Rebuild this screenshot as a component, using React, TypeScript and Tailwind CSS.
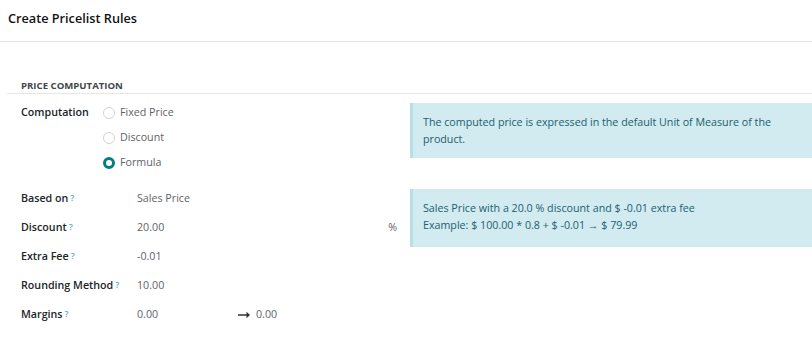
import React from "react";

const font = { fontFamily: '"Open Sans", "Noto Sans", sans-serif' };

function Q() {
  return <sup className="ml-[2px] text-[9px] font-semibold text-[#5aa9d6] relative -top-[1px]">?</sup>;
}

function Radio({ checked, label }: { checked?: boolean; label: string }) {
  return (
    <div className="flex h-[25px] items-center">
      <span
        className={
          checked
            ? "box-border h-[12px] w-[12px] rounded-full border-[3.5px] border-[#017e84] bg-white"
            : "box-border h-[12px] w-[12px] rounded-full border border-[#cfd4da] bg-white"
        }
      />
      <span className="ml-[5px] text-[#5f6368]">{label}</span>
    </div>
  );
}

function Field({ label, children }: { label: string; children: React.ReactNode }) {
  return (
    <div className="flex h-[29px] items-center">
      <div className="w-[116px] font-semibold text-[#212529]">
        {label}
        <Q />
      </div>
      <div className="flex flex-1 items-center text-[#5f6368]">{children}</div>
    </div>
  );
}

export default function App() {
  return (
    <div className="h-[338px] w-[812px] overflow-hidden bg-white text-[10.7px] leading-[17px]" style={font}>
      <div className="h-[42px] border-b border-[#e3e3e3] pl-[8px] pt-[8px]">
        <div className="text-[12.7px] font-semibold leading-[20px] text-[#111]">Create Pricelist Rules</div>
      </div>
      <div className="ml-[7px] mt-[37px] border-b border-[#e6e6e6] pl-[14px]">
        <div className="text-[9.6px] font-bold uppercase leading-[14px] text-[#3f464d]">Price Computation</div>
      </div>
      <div className="mt-[6px] flex">
        <div className="flex w-[410px] pl-[21px]">
          <div className="flex h-[25px] w-[82px] items-center font-semibold text-[#212529]">Computation</div>
          <div className="flex flex-col">
            <Radio label="Fixed Price" />
            <Radio label="Discount" />
            <Radio checked label="Formula" />
          </div>
        </div>
        <div className="mt-[3px] flex-1 self-start border-l-[3px] border-[#b8dee6] bg-[#d1ebf0] pb-[10px] pl-[10px] pr-[30px] pt-[11px] text-[10.7px] text-[#22606e]">
          The computed price is expressed in the default Unit of Measure of the product.
        </div>
      </div>
      <div className="mt-[9px] flex">
        <div className="w-[410px] pl-[21px]">
          <Field label="Based on">Sales Price</Field>
          <Field label="Discount">
            <span className="flex-1">20.00</span>
            <span className="mr-[13px]">%</span>
          </Field>
          <Field label="Extra Fee">-0.01</Field>
          <Field label="Rounding Method">10.00</Field>
          <Field label="Margins">
            <span className="w-[101px]">0.00</span>
            <svg width="12" height="8" viewBox="0 0 12 8" className="mr-[6px]">
              <path d="M0 3.2h8.5V0.8L12 4l-3.5 3.2V4.8H0z" fill="#333" />
            </svg>
            <span>0.00</span>
          </Field>
        </div>
        <div className="mt-[5px] flex-1 self-start border-l-[3px] border-[#b8dee6] bg-[#d1ebf0] pb-[13px] pl-[10px] pr-[20px] pt-[11px] text-[10.7px] text-[#22606e]">
          <div>Sales Price with a 20.0 % discount and $ -0.01 extra fee</div>
          <div>Example: $ 100.00 * 0.8 + $ -0.01 → $ 79.99</div>
        </div>
      </div>
    </div>
  );
}
